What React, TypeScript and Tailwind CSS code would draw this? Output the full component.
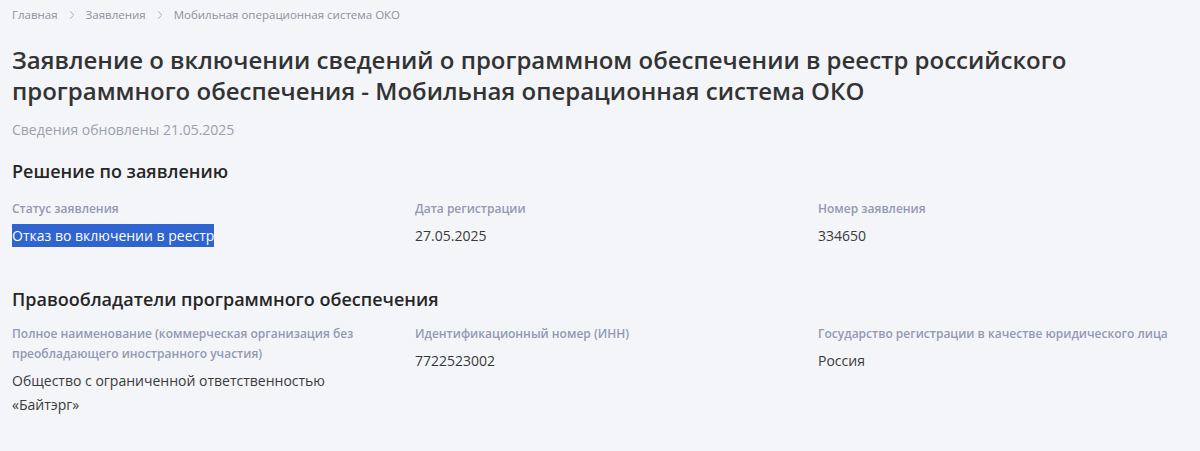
import { ChevronRight } from "lucide-react";

const decision = [
  { label: "Статус заявления", value: "Отказ во включении в реестр", selected: true },
  { label: "Дата регистрации", value: "27.05.2025" },
  { label: "Номер заявления", value: "334650" },
];

const holders = [
  {
    label: "Полное наименование (коммерческая организация без преобладающего иностранного участия)",
    value: "Общество с ограниченной ответственностью «Байтэрг»",
  },
  { label: "Идентификационный номер (ИНН)", value: "7722523002" },
  { label: "Государство регистрации в качестве юридического лица", value: "Россия" },
];

function Field({ label, value, selected }: { label: string; value: string; selected?: boolean }) {
  return (
    <div>
      <div className="text-[12px] font-semibold leading-[20px] text-[#9299b1]">{label}</div>
      <div className="mt-[5px] text-[14px] leading-[24px] text-[#3a3a3a]">
        {selected ? <span className="bg-[#2f63cf] py-[2px] text-white">{value}</span> : value}
      </div>
    </div>
  );
}

export default function App() {
  return (
    <div className="min-h-[451px] bg-[#f4f5f9] px-[12px] pt-[6px] font-['Open_Sans',sans-serif]">
      <nav className="flex items-center gap-[5px] text-[11.5px] leading-[18px] text-[#8d929c]">
        <span>Главная</span>
        <ChevronRight size={14} strokeWidth={1.5} className="mx-[2px] text-[#a0a4ad]" />
        <span>Заявления</span>
        <ChevronRight size={14} strokeWidth={1.5} className="mx-[2px] text-[#a0a4ad]" />
        <span>Мобильная операционная система ОКО</span>
      </nav>

      <h1 className="mt-[20px] max-w-[1060px] text-[24px] font-semibold leading-[31px] text-[#333333]">
        Заявление о включении сведений о программном обеспечении в реестр российского программного
        обеспечения - Мобильная операционная система ОКО
      </h1>
      <p className="mt-[14px] text-[14px] leading-[20px] text-[#9aa0ac]">Сведения обновлены 21.05.2025</p>

      <section className="mt-[18px]">
        <h2 className="text-[18px] font-semibold leading-[26px] text-[#262626]">Решение по заявлению</h2>
        <div className="mt-[15px] grid grid-cols-[373px_373px_1fr] gap-x-[30px]">
          {decision.map((item) => (
            <Field key={item.label} {...item} />
          ))}
        </div>
      </section>

      <section className="mt-[38px]">
        <h2 className="text-[18px] font-semibold leading-[26px] text-[#262626]">
          Правообладатели программного обеспечения
        </h2>
        <div className="mt-[12px] grid grid-cols-[373px_373px_1fr] gap-x-[30px]">
          {holders.map((item) => (
            <Field key={item.label} {...item} />
          ))}
        </div>
      </section>
    </div>
  );
}
